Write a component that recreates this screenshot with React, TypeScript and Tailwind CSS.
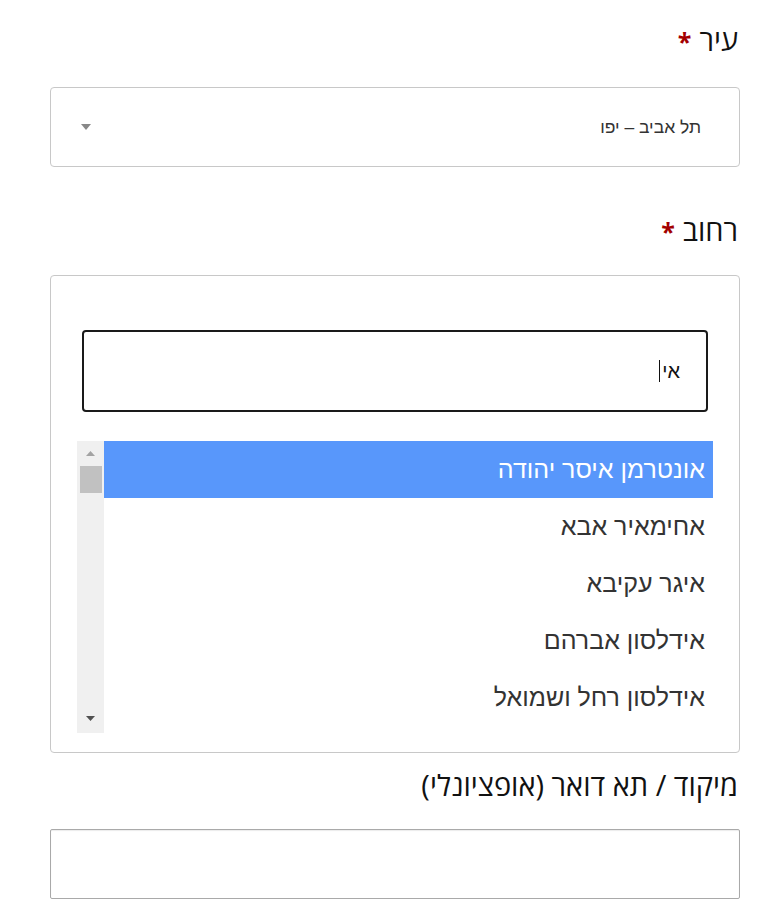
const STREETS = [
  "אונטרמן איסר יהודה",
  "אחימאיר אבא",
  "איגר עקיבא",
  "אידלסון אברהם",
  "אידלסון רחל ושמואל",
];

function Label({ text, required }: { text: string; required?: boolean }) {
  return (
    <div className="h-[36px] pr-[2px] text-[29px] leading-[36px] text-[#111] [font-family:'Open_Sans','Liberation_Sans',sans-serif]">
      {text}
      {required && <span className="mr-[8px] text-[25px] font-bold text-[#a30000]">*</span>}
    </div>
  );
}

export default function App() {
  return (
    <div dir="rtl" className="min-h-screen bg-white pl-[50px] pr-[30px] pt-[22px] [font-family:'Liberation_Sans',sans-serif]">
      {/* City */}
      <Label text="עיר" required />
      <div className="mt-[29px] flex h-[80px] items-center justify-between rounded-[4px] border border-[#c8c8c8] pl-[30px] pr-[38px]">
        <span className="text-[17.5px] text-[#333]">תל אביב – יפו</span>
        <svg width="10" height="6" viewBox="0 0 10 6">
          <path d="M0 0h10L5 6z" fill="#888" />
        </svg>
      </div>

      {/* Street */}
      <div className="mt-[45px]">
        <Label text="רחוב" required />
      </div>
      <div className="mt-[27px] h-[478px] rounded-[4px] border border-[#c8c8c8] px-[31px] pt-[54px]">
        <div className="flex h-[82px] items-center rounded-[4px] border-2 border-[#1a1a1a] pr-[26px]">
          <span className="text-[20px] text-[#111]">אי</span>
          <span className="mr-[2px] h-[22px] w-px bg-[#111]" />
        </div>
        <div className="-mx-[5px] mt-[29px] flex h-[292px]">
          <ul className="flex-1">
            {STREETS.map((s, i) => (
              <li
                key={s}
                className={
                  "flex h-[57px] items-center pr-[8px] text-[25px] " +
                  (i === 0 ? "bg-[#5897fb] text-white" : "text-[#333]")
                }
              >
                {s}
              </li>
            ))}
          </ul>
          <div className="flex w-[27px] flex-col items-center bg-[#f0f0f0]">
            <svg className="mt-[10px]" width="9" height="5" viewBox="0 0 9 5">
              <path d="M0 5h9L4.5 0z" fill="#a3a3a3" />
            </svg>
            <div className="mt-[10px] h-[27px] w-[22px] bg-[#c1c1c1]" />
            <div className="flex-1" />
            <svg className="mb-[12px]" width="9" height="5" viewBox="0 0 9 5">
              <path d="M0 0h9L4.5 5z" fill="#505050" />
            </svg>
          </div>
        </div>
      </div>

      {/* Postal code */}
      <div className="mt-[14px]">
        <Label text="מיקוד / תא דואר (אופציונלי)" />
      </div>
      <div className="mt-[26px] h-[70px] rounded-[2px] border border-[#a9a9a9] shadow-[inset_0_1px_1px_rgba(0,0,0,0.08)]" />
    </div>
  );
}
